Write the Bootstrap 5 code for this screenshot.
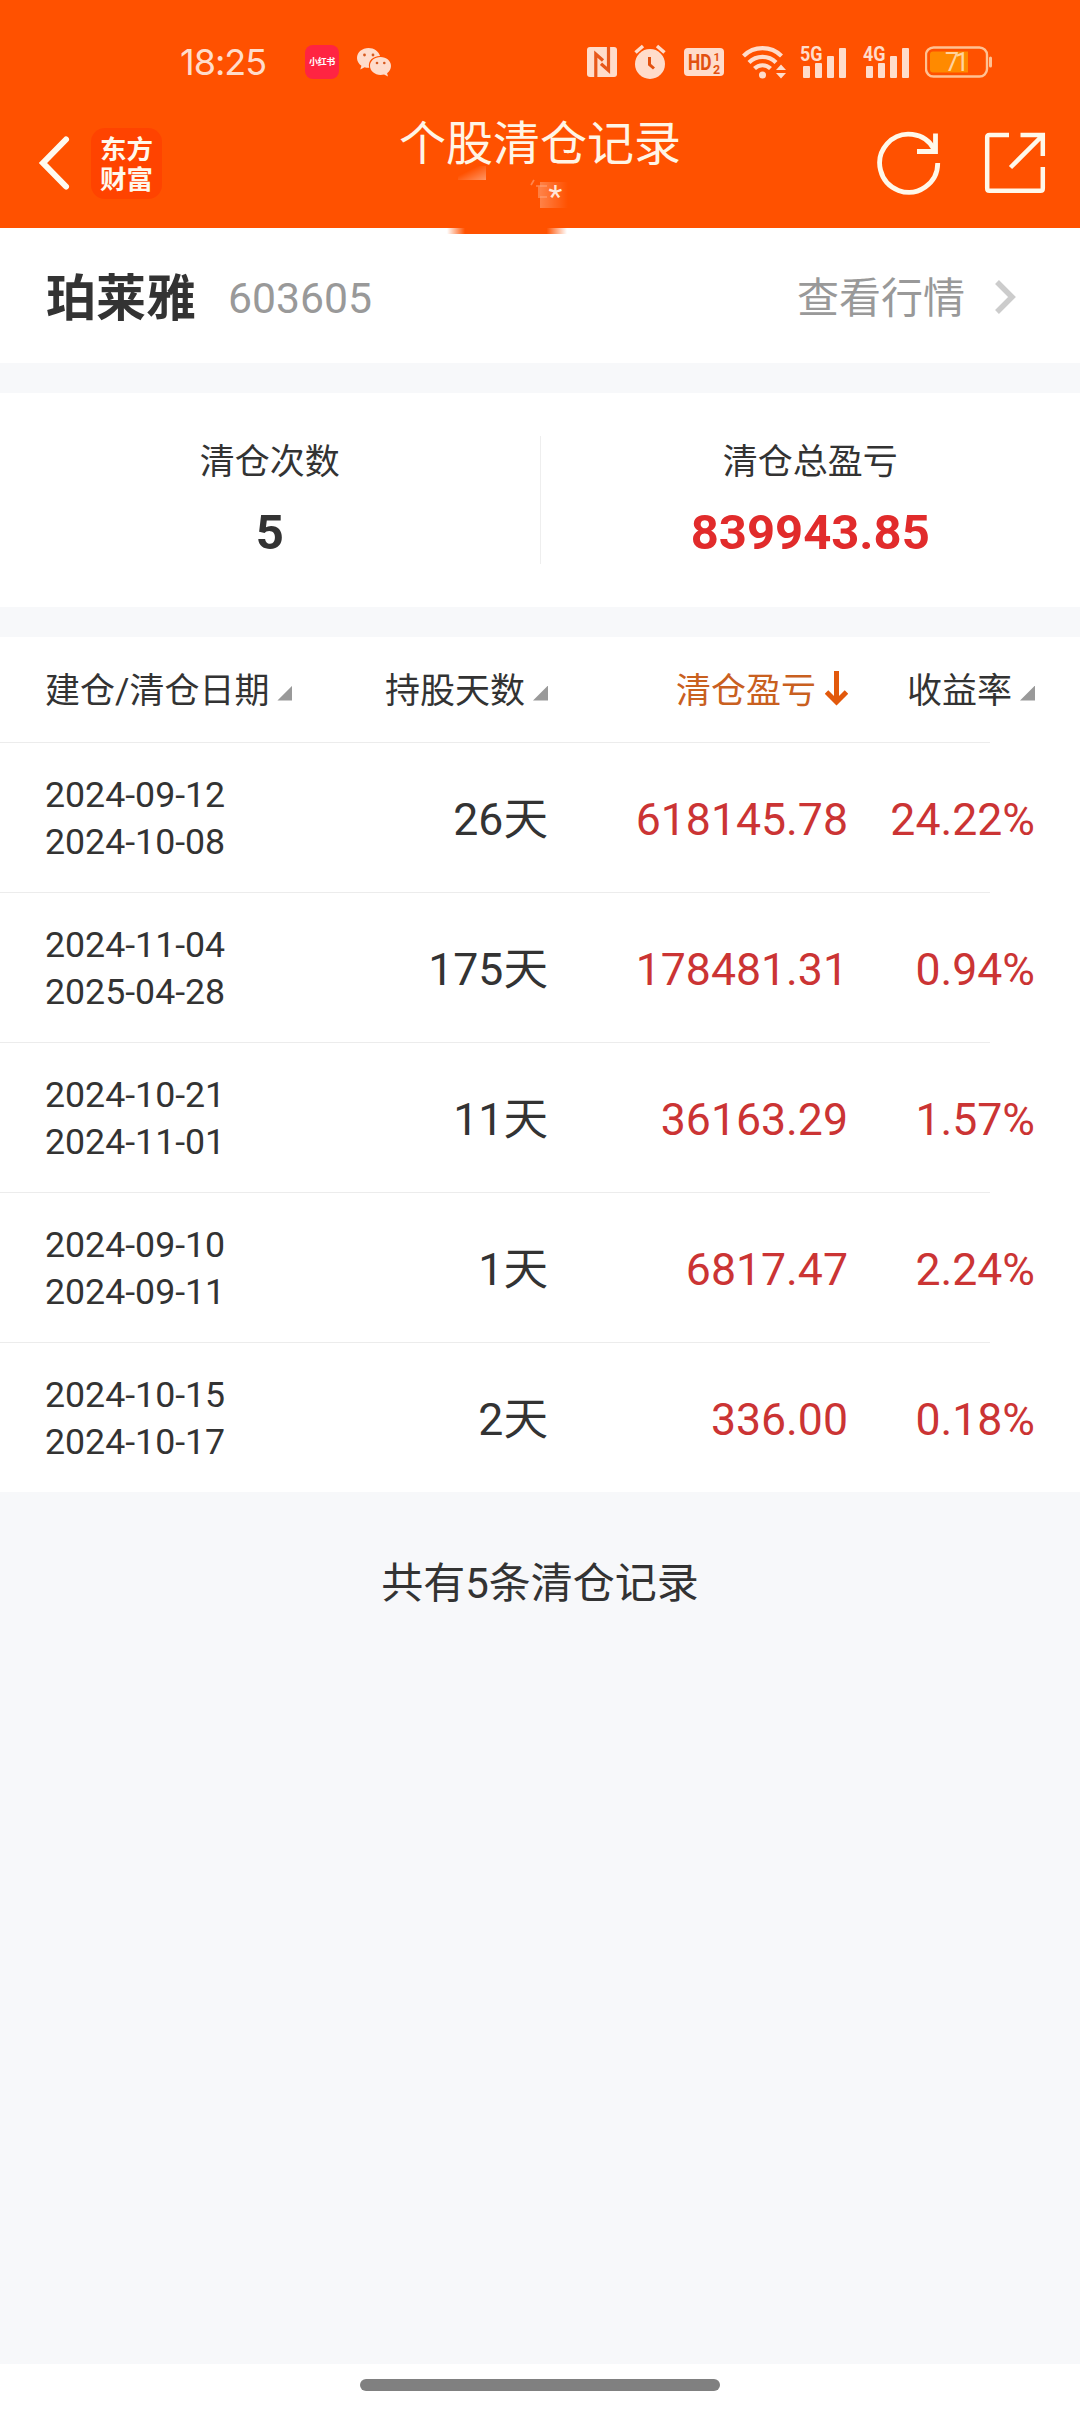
<!DOCTYPE html>
<html lang="zh-CN">
<head>
<meta charset="utf-8">
<meta name="viewport" content="width=device-width, initial-scale=1">
<title>个股清仓记录</title>
<link href="https://cdn.jsdelivr.net/npm/bootstrap@5.3.0/dist/css/bootstrap.min.css" rel="stylesheet">
<style>
body{width:1080px;min-height:2412px;background:#f7f8fa;color:#333;font-family:Roboto,"Noto Sans CJK SC",sans-serif;overflow-x:hidden}
svg{display:block;flex:none}
.top-area{background:#ff5100;height:228px}
.status{height:84px;padding:40px 0 0 180px;color:#ffdccb}
.clock{font:400 36px/44px Inter,Roboto,sans-serif;width:125px;letter-spacing:-1px}
.xhs{width:34px;height:34px;border-radius:8px;background:#ff2442;color:#fff;font:700 9px/34px "Noto Sans CJK SC",sans-serif;margin-right:18px;letter-spacing:-.3px}
.s-nfc{margin-left:196px}
.s-17{margin-left:17px}
.s-18{margin-left:18px}
.s-13{margin-left:13px}
.s-16{margin-left:16px}
.titlebar{height:144px;padding:0 34px 0 37px}
.titlebar .ico{margin-top:13px}
.brand{width:71px;height:71px;border-radius:14px;background:#ff4300;color:#fff8ec;font:700 26.5px/30px "Noto Sans CJK SC",sans-serif;margin:14px 0 0 18px}
.brand span{display:block;height:30px}
.page-title{position:absolute;left:0;right:0;top:29px;font-size:47px;line-height:62px;color:#fff5e6;pointer-events:none}
.masked{position:absolute;left:440px;top:76px}
.share{margin-left:42px}
.stock{height:135px;padding:4px 63px 0 46px}
.stock-name{font-size:50px;font-weight:700;line-height:60px;padding-top:3px}
.code{font-size:42.7px;color:#999;margin-left:32px;padding-top:1px}
.more{font-size:42px;color:#999;padding-top:2px}
.chev{margin-left:29px;margin-top:-2px}
.sum{height:214px;margin-top:30px}
.sum .side{padding-top:44px}
.sum .lbl{font-size:35px;line-height:52px}
.sum .val{font-size:49px;font-weight:700;line-height:60px;margin-top:14px}
.rule{width:1px;height:128px;background:#eee;margin-top:43px}
.red-strong{color:#e12b2b}
.records{margin-top:30px}
.line{display:grid;grid-template-columns:251px 252px 300px 187px;padding:0 45px;align-items:center;height:150px;position:relative}
.line.head{height:106px;font-size:35px;padding-top:5px}
.line:last-child{height:149px}
.line:not(:last-child)::after{content:"";position:absolute;left:0;bottom:0;width:990px;height:1px;background:#ececec}
.line>div{white-space:nowrap}
.r{text-align:right}
.dates{font-size:35.7px;line-height:47px;padding-top:2px}
.num{font-size:44.6px;line-height:60px;padding-top:4px}
.red{color:#cb3434}
.tri{width:15px;height:15px;background:#999;clip-path:polygon(100% 0,100% 100%,0 100%);margin:1px 0 0 8px}
.sorted{margin:-8px 0 0 9px}
.on{color:#c9601f}
.total{font-size:42px;line-height:60px;padding-top:62px}
.homebar{position:absolute;left:0;top:2364px;width:1080px;height:48px;background:#fff;padding-top:15px}
.homebar i{display:block;width:360px;height:12px;border-radius:6px;background:#808080}
</style>
</head>
<body>
<header class="top-area">
  <div class="status d-flex align-items-center">
    <div class="clock">18:25</div>
    <div class="xhs text-center">小红书</div>
    <svg width="34" height="30" viewBox="0 0 34 30" fill="#ffdccb"><path d="M11.500 1C5.200 1 0 5.300 0 11c0 3.200 1.700 5.900 4.400 7.700L3.300 22.500l4.300-2.200c1.500.4 3 .6 4.600.5C10.500 14 16 9 23 9 21.800 4.300 17 1 11.500 1z"/><path d="M34 19c0-4.900-4.600-8.900-10.500-8.900S13 14.100 13 19s4.700 8.900 10.500 8.900c1.300 0 2.500-.2 3.600-.5L31 29.500l-.9-3.300C32.500 24.500 34 21.900 34 19z"/><g fill="#d65a20"><circle cx="7.500" cy="8" r="1.400"/><circle cx="16" cy="8" r="1.400"/><circle cx="20" cy="16" r="1.300"/><circle cx="27.300" cy="16" r="1.300"/></g></svg>
    <svg class="s-nfc" width="30" height="30" viewBox="0 0 30 30"><rect width="30" height="30" rx="3" fill="#ffdccb"/><path d="M8.800 30V7L16 13.500M21.500 0v23.500L14 16.800" fill="none" stroke="#e8571a" stroke-width="3.200"/></svg>
    <svg class="s-17" width="32" height="36" viewBox="0 0 32 36"><circle cx="16" cy="20" r="15" fill="#ffdccb"/><path d="M1.500 8.500 9 2M23 2l7.500 6.500" stroke="#ffdccb" stroke-width="3.500"/><path d="M15.500 13v7.500l4.500 4" fill="none" stroke="#e2500f" stroke-width="3"/></svg>
    <svg class="s-18" width="40" height="28" viewBox="0 0 40 28"><rect width="40" height="28" rx="4" fill="#ffdccb"/><g fill="#e2500f" font-family="Roboto" font-weight="700"><text x="4" y="22" font-size="22" textLength="23.500" lengthAdjust="spacingAndGlyphs">HD</text><text x="29.500" y="12.500" font-size="11.500">1</text><text x="29" y="25.500" font-size="12.500">2</text></g></svg>
    <svg class="s-18" width="45" height="36" viewBox="0 0 45 36"><g fill="none" stroke="#ffdccb" stroke-width="4.200"><path d="M1.500 12a27 27 0 0 1 38 0"/><path d="M7 18.500a19 19 0 0 1 27 0"/><path d="M12.500 24.500a11.500 11.500 0 0 1 16 0"/></g><circle cx="20.500" cy="31" r="3.500" fill="#ffdccb"/><path d="M34 26l5-5.500 5 5.500zM34 29h10l-5 5.500z" fill="#ffdccb"/></svg>
    <svg class="s-13" width="46" height="50" viewBox="0 -8 46 50" fill="#ffdccb"><text x="0" y="16" font-family="Roboto" font-weight="700" font-size="21" textLength="22.500" lengthAdjust="spacingAndGlyphs">5G</text><rect x="3" y="21" width="7" height="12" rx="1"/><rect x="15" y="18" width="7" height="15" rx="1"/><rect x="27" y="11" width="7" height="22" rx="1"/><rect x="39" y="3" width="7" height="30" rx="1"/></svg>
    <svg class="s-17" width="46" height="50" viewBox="0 -8 46 50" fill="#ffdccb"><text x="0" y="16" font-family="Roboto" font-weight="700" font-size="21" textLength="22.500" lengthAdjust="spacingAndGlyphs">4G</text><rect x="3" y="21" width="7" height="12" rx="1"/><rect x="15" y="18" width="7" height="15" rx="1"/><rect x="27" y="11" width="7" height="22" rx="1"/><rect x="39" y="3" width="7" height="30" rx="1"/></svg>
    <svg class="s-16" width="68" height="32" viewBox="0 0 68 32"><rect x="1" y="1.500" width="61" height="29" rx="7.500" fill="none" stroke="#ffc193" stroke-width="2.400"/><path d="M8 5.500h35v21H8a3 3 0 0 1-3-3v-15a3 3 0 0 1 3-3z" fill="#ff8a00"/><rect x="64" y="10.500" width="3" height="11" rx="1.500" fill="#ffc193"/><text x="20" y="25" font-family="Roboto" font-size="25" fill="#ffd3a0" textLength="24">71</text></svg>
  </div>
  <nav class="titlebar d-flex align-items-center position-relative">
    <svg class="ico" width="36" height="56" viewBox="0 0 36 56"><path d="M29 4.500 6 28l23 23.500" fill="none" stroke="#fffaf0" stroke-width="6" stroke-linecap="round"/></svg>
    <div class="brand text-center d-flex flex-column justify-content-center"><span>东方</span><span>财富</span></div>
    <div class="page-title text-center">个股清仓记录</div>
    <svg class="ms-auto ico" width="64" height="64" viewBox="0 0 64 64" fill="none" stroke="#fff8ea" stroke-width="4.800"><path d="M60.700 32A29 29 0 1 1 57.500 19"/><path d="M40 20.500h18.500V2.500"/></svg>
    <svg class="ico share" width="63" height="64" viewBox="0 0 63 64" fill="none" stroke="#fff8ea" stroke-width="4.500"><path d="M26 4H6.500Q4.200 4 4.200 6.300v51.200Q4.200 59.800 6.500 59.800h51Q59.800 59.800 59.800 57.500V36M37.500 4h22.300v21M27.500 36.500 59 5"/></svg>
    <svg class="masked" width="140" height="76" viewBox="0 0 140 76"><defs><linearGradient id="a" x1="0" y1="0" x2="1" y2="1"><stop offset=".35" stop-color="#fff" stop-opacity="0"/><stop offset="1" stop-color="#fff" stop-opacity=".4"/></linearGradient><linearGradient id="b" x1="0" y1="0" x2="1" y2="0"><stop offset="0" stop-color="#fff" stop-opacity=".28"/><stop offset="1" stop-color="#fff" stop-opacity="0"/></linearGradient><linearGradient id="c"><stop offset="0" stop-color="#ff5100" stop-opacity="0"/><stop offset=".15" stop-color="#ff5100"/><stop offset=".83" stop-color="#ff5100"/><stop offset="1" stop-color="#ff5100" stop-opacity="0"/></linearGradient></defs><rect x="18" y="6" width="28" height="14" fill="url(#a)"/><rect x="100" y="22" width="28" height="26" fill="url(#b)"/><path d="M94 20l-3 5M96 26h11M99 26v12M100 37h7" stroke="#ffb28c" stroke-opacity=".55" stroke-width="1.700" fill="none"/><text x="108.500" y="47" font-family="Roboto" font-size="32" fill="#ffe6d8">*</text><rect x="7" y="68" width="120" height="6" fill="url(#c)"/></svg>
  </nav>
</header>
<main>
  <section class="stock bg-white d-flex align-items-center">
    <span class="stock-name">珀莱雅</span><span class="code">603605</span>
    <span class="more ms-auto">查看行情</span>
    <svg class="chev" width="23" height="36" viewBox="0 0 23 36"><path d="M3 3l15 15L3 33" fill="none" stroke="#ccc" stroke-width="5.500"/></svg>
  </section>
  <section class="sum bg-white d-flex text-center">
    <div class="side flex-fill w-50"><div class="lbl">清仓次数</div><div class="val">5</div></div>
    <div class="rule"></div>
    <div class="side flex-fill w-50"><div class="lbl">清仓总盈亏</div><div class="val red-strong">839943.85</div></div>
  </section>
  <section class="records bg-white">
    <div class="line head">
      <div class="d-flex align-items-center">建仓/清仓日期<i class="tri"></i></div>
      <div class="d-flex align-items-center justify-content-end">持股天数<i class="tri"></i></div>
      <div class="d-flex align-items-center justify-content-end on">清仓盈亏<svg class="sorted" width="23" height="35" viewBox="0 0 23 35"><path d="M11.500 0v31M1.500 21l10 10 10-10" fill="none" stroke="#e2590c" stroke-width="5"/></svg></div>
      <div class="d-flex align-items-center justify-content-end">收益率<i class="tri"></i></div>
    </div>
    <div class="line"><div class="dates">2024-09-12<br>2024-10-08</div><div class="num r">26天</div><div class="num r red">618145.78</div><div class="num r red">24.22%</div></div>
    <div class="line"><div class="dates">2024-11-04<br>2025-04-28</div><div class="num r">175天</div><div class="num r red">178481.31</div><div class="num r red">0.94%</div></div>
    <div class="line"><div class="dates">2024-10-21<br>2024-11-01</div><div class="num r">11天</div><div class="num r red">36163.29</div><div class="num r red">1.57%</div></div>
    <div class="line"><div class="dates">2024-09-10<br>2024-09-11</div><div class="num r">1天</div><div class="num r red">6817.47</div><div class="num r red">2.24%</div></div>
    <div class="line"><div class="dates">2024-10-15<br>2024-10-17</div><div class="num r">2天</div><div class="num r red">336.00</div><div class="num r red">0.18%</div></div>
  </section>
  <div class="total text-center">共有5条清仓记录</div>
</main>
<footer class="homebar d-flex justify-content-center align-items-start"><i></i></footer>
<script src="https://cdn.jsdelivr.net/npm/bootstrap@5.3.0/dist/js/bootstrap.bundle.min.js"></script>
</body>
</html>
